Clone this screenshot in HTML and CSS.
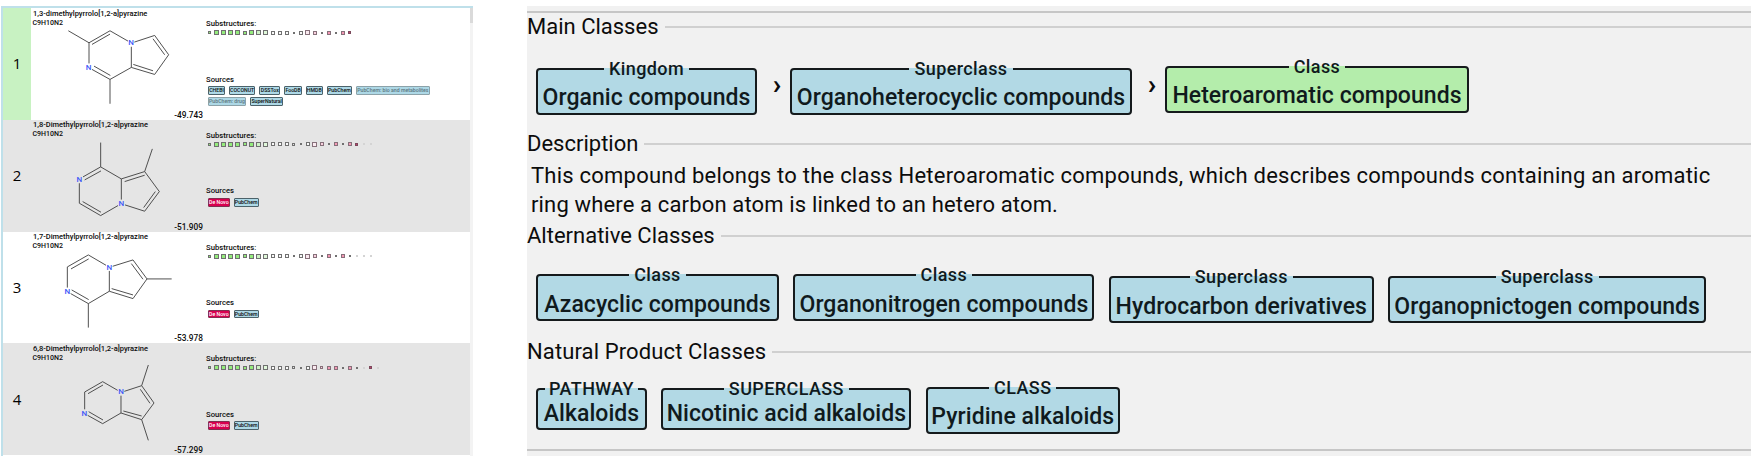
FILE: index.html
```html
<!DOCTYPE html>
<html lang="en">
<head>
<meta charset="utf-8">
<title>Compound classes</title>
<link rel="stylesheet" href="styles.css">
</head>
<body>
<main class="app">
  <div class="list">
    <div class="rows">
      <article class="row selected">
        <div class="index">1</div>
        <div class="structure">
          <div class="heading"><div class="name">1,3-dimethylpyrrolo[1,2-a]pyrazine</div><div class="formula">C9H10N2</div></div>
          <svg class="molecule" viewBox="93 23.7 525 335.4">
            <path d="M205 92L267 128L330 92L384 123M276 133L330 102M403 126L464 106L506 164L464 223L394 202V140M459 116L494 164M400 193L459 212M394 202L330 238L276 208M331 226L282 198M330 238V311M267 128V190"/>
            <text x="393" y="136">N</text><text x="266" y="209">N</text>
          </svg>
          <div class="score">-49.743</div>
        </div>
        <div class="info">
          <div class="label">Substructures:</div>
          <div class="dots"><i class="s g"></i><i class="l g"></i><i class="l g"></i><i class="l g"></i><i class="l g"></i><i class="m g"></i><i class="l g"></i><i class="l g2"></i><i class="l g3"></i><i class="m"></i><i class="m"></i><i class="m"></i><i class="d"></i><i class="m"></i><i class="l p1"></i><i class="m p2"></i><i class="d"></i><i class="m p3"></i><i class="d"></i><i class="m p3"></i><i class="s p4"></i></div>
          <div class="label sources">Sources</div>
          <div class="tags"><span class="tag w17">CHEBI</span><span class="tag w26">COCONUT</span><span class="tag w21">DSSTox</span><span class="tag w17">FooDB</span><span class="tag w17">HMDB</span><span class="tag w25">PubChem</span><span class="tag dim w74">PubChem: bio and metabolites</span><span class="tag dim w38">PubChem: drug</span><span class="tag w33">SuperNatural</span></div>
        </div>
      </article>
      <article class="row even">
        <div class="index">2</div>
        <div class="structure">
          <div class="heading"><div class="name">1,8-Dimethylpyrrolo[1,2-a]pyrazine</div><div class="formula">C9H10N2</div></div>
          <svg class="molecule" viewBox="93 14.3 525 335.4">
            <path d="M302 82V155L249 185M303 167L254 194M238 204V264L302 301L354 271M248 259L303 291M364 253V191L302 155M364 191L434 169L457 101M374 199L434 180M434 169L478 229L434 288L375 269M466 229L431 277"/>
            <text x="238" y="199">N</text><text x="364" y="272">N</text>
          </svg>
          <div class="score">-51.909</div>
        </div>
        <div class="info">
          <div class="label">Substructures:</div>
          <div class="dots"><i class="s g"></i><i class="l g"></i><i class="l g"></i><i class="l g"></i><i class="l g"></i><i class="m g"></i><i class="l g"></i><i class="l g2"></i><i class="l g3"></i><i class="m"></i><i class="m"></i><i class="m"></i><i class="s"></i><i class="d"></i><i class="m"></i><i class="l p1"></i><i class="m p2"></i><i class="d"></i><i class="m p3"></i><i class="d"></i><i class="m p3"></i><i class="s p4"></i><i class="f"></i><i class="f"></i></div>
          <div class="label sources">Sources</div>
          <div class="tags"><span class="tag novo">De Novo</span><span class="tag w25">PubChem</span></div>
        </div>
      </article>
      <article class="row">
        <div class="index">3</div>
        <div class="structure">
          <div class="heading"><div class="name">1,7-Dimethylpyrrolo[1,2-a]pyrazine</div><div class="formula">C9H10N2</div></div>
          <svg class="molecule" viewBox="93 11.2 525 335.4">
            <path d="M202 178V116L265 80L318 111M213 122L266 92M338 114L399 95L441 152H515M394 106L429 153M441 152L399 211L328 189V128M335 181L399 200M328 189L265 226L212 196M266 214L215 185M265 226V298"/>
            <text x="328" y="124">N</text><text x="202" y="197">N</text>
          </svg>
          <div class="score">-53.978</div>
        </div>
        <div class="info">
          <div class="label">Substructures:</div>
          <div class="dots"><i class="s g"></i><i class="l g"></i><i class="l g"></i><i class="l g"></i><i class="l g"></i><i class="m g"></i><i class="l g"></i><i class="l g2"></i><i class="l g3"></i><i class="m"></i><i class="m"></i><i class="m"></i><i class="d"></i><i class="m"></i><i class="l p1"></i><i class="m p2"></i><i class="d"></i><i class="m p3"></i><i class="d"></i><i class="m p3"></i><i class="d"></i><i class="f"></i><i class="f"></i><i class="f"></i></div>
          <div class="label sources">Sources</div>
          <div class="tags"><span class="tag novo">De Novo</span><span class="tag w25">PubChem</span></div>
        </div>
      </article>
      <article class="row even">
        <div class="index">4</div>
        <div class="structure">
          <div class="heading"><div class="name">6,8-Dimethylpyrrolo[1,2-a]pyrazine</div><div class="formula">C9H10N2</div></div>
          <svg class="molecule" viewBox="93 22 525 335.4">
            <path d="M254 221V169L308 138L353 164M264 174L309 148M373 167L425 150L445 88M425 150L462 202L425 252L445 314M421 161L450 203M425 252L363 232V180M370 226L425 241M363 232L308 264L263 239M309 253L266 228"/>
            <text x="363" y="176">N</text><text x="253" y="240">N</text>
          </svg>
          <div class="score">-57.299</div>
        </div>
        <div class="info">
          <div class="label">Substructures:</div>
          <div class="dots"><i class="s g"></i><i class="l g"></i><i class="l g"></i><i class="l g"></i><i class="l g"></i><i class="m g"></i><i class="l g"></i><i class="l g2"></i><i class="l g3"></i><i class="m"></i><i class="m"></i><i class="m"></i><i class="s"></i><i class="d"></i><i class="m"></i><i class="l p1"></i><i class="s p2"></i><i class="m p3"></i><i class="m p3"></i><i class="d"></i><i class="m p3"></i><i class="d"></i><i class="f"></i><i class="s p4"></i><i class="f"></i></div>
          <div class="label sources">Sources</div>
          <div class="tags"><span class="tag novo">De Novo</span><span class="tag w25">PubChem</span></div>
        </div>
      </article>
    </div>
    <div class="scrollbar"><div class="thumb"></div></div>
  </div>

  <div class="detail">
    <section class="group main">
      <h2><span>Main Classes</span></h2>
      <div class="chips">
        <div class="chip kingdom"><span class="title">Kingdom</span><span class="value">Organic compounds</span></div>
        <span class="arrow">›</span>
        <div class="chip hetero"><span class="title">Superclass</span><span class="value">Organoheterocyclic compounds</span></div>
        <span class="arrow">›</span>
        <div class="chip green"><span class="title">Class</span><span class="value">Heteroaromatic compounds</span></div>
      </div>
    </section>
    <section class="group description">
      <h2><span>Description</span></h2>
      <p>This compound belongs to the class Heteroaromatic compounds, which describes compounds containing an aromatic<br><span class="last">ring where a carbon atom is linked to an hetero atom.</span></p>
    </section>
    <section class="group alternative">
      <h2><span>Alternative Classes</span></h2>
      <div class="chips">
        <div class="chip aza"><span class="title">Class</span><span class="value">Azacyclic compounds</span></div>
        <div class="chip nitro"><span class="title">Class</span><span class="value">Organonitrogen compounds</span></div>
        <div class="chip hydro"><span class="title">Superclass</span><span class="value">Hydrocarbon derivatives</span></div>
        <div class="chip pnicto"><span class="title">Superclass</span><span class="value">Organopnictogen compounds</span></div>
      </div>
    </section>
    <section class="group natural">
      <h2><span>Natural Product Classes</span></h2>
      <div class="chips">
        <div class="chip short alk"><span class="title">PATHWAY</span><span class="value">Alkaloids</span></div>
        <div class="chip short nico"><span class="title">SUPERCLASS</span><span class="value">Nicotinic acid alkaloids</span></div>
        <div class="chip pyri"><span class="title">CLASS</span><span class="value">Pyridine alkaloids</span></div>
      </div>
    </section>
  </div>
</main>
</body>
</html>
```
FILE: styles.css
```css
* { box-sizing: border-box; }
body { margin: 0; background: #fff; color: #0c0c0c; font-family: Roboto, "Liberation Sans", sans-serif; overflow: hidden; }
.app { display: flex; height: 456px; padding: 6px 0 0 1px; }

/* Candidate list */
.list { display: flex; width: 472px; height: 449.5px; margin-right: 54px; border-top: 2px solid #bfe0ea; border-left: 2px solid #bfe0ea; }
.rows { width: 467px; }
.row { display: flex; height: 111.8px; background: #fff; }
.row.even { background: #e5e5e5; }
.index { display: flex; align-items: center; justify-content: center; width: 28px; padding-bottom: 1.5px; font: 15px "Open Sans", sans-serif; color: #000; }
.selected .index { background: #c8f2c2; }
.structure { display: grid; width: 175px; }
.structure > * { grid-area: 1 / 1; }
.heading { padding: .6px 0 0 2px; font-weight: 500; white-space: nowrap; }
.name { font-size: 7.5px; line-height: 10px; }
.formula { font-size: 7px; line-height: 8px; margin-left: -.5px; }
.molecule { width: 175px; height: 111.8px; }
.molecule path { fill: none; stroke: #444; stroke-width: 2.8; }
.molecule text { fill: #4058f8; font-size: 24px; font-weight: 500; text-anchor: middle; }
.score { align-self: end; justify-self: end; margin-right: 3px; font-size: 8.3px; line-height: 10px; font-weight: 500; }
.info { width: 264px; }
.label { font-size: 7.7px; line-height: 10px; font-weight: 500; padding-top: 11px; }
.dots { display: flex; height: 7px; align-items: center; }
.dots i { flex: none; width: 3px; height: 3px; margin: 0 2px; border: 1px solid #707070; }
.dots .l { width: 5px; height: 5px; margin: 0 1px; }
.dots .m { width: 4px; height: 4px; margin: 0 1.5px; }
.dots .d { width: 2px; height: 2px; margin: 0 2.5px; }
.dots .f { width: 2px; height: 2px; margin: 0 2.5px; border-color: #d4d4d4; }
.m { background: #fafafa; }
.g { background: #94ec7c; }
.g2 { background: #cdf2c4; }
.g3 { background: #e0f8da; }
.p1 { background: #faeaf0; }
.p2 { background: #f8d0de; }
.dots .p1, .dots .p2, .dots .p3 { border-color: #86707a; }
.m.p3 { background: #f498b4; }
.dots .s.p4 { background: #c04070; border-color: #7c4a5c; }
.sources { padding-top: 38.7px; }
.tags { display: flex; flex-wrap: wrap; gap: 2.3px 4px; padding: 1.4px 0 0 2px; }
.tag { height: 8.8px; width: 25px; border: 1px solid #4c626a; border-radius: 1px; background: #add8e6; font-size: 5.2px; font-weight: 500; line-height: 7px; display: flex; justify-content: center; white-space: nowrap; }
.w17 { width: 17.2px; } .w21 { width: 21.3px; } .w26 { width: 26px; } .w33 { width: 33.3px; } .w38 { width: 38px; } .w74 { width: 74px; }
.tag.dim { color: #5c757e; border-color: #8ca2a9; }
.tag.novo { width: 21.7px; background: #d8004f; color: #fff; border-color: #803050; }
.scrollbar { width: 3px; background: #f3f3f3; }
.thumb { height: 15px; background: #dadada; }

/* Class details */
.detail { width: 1224px; height: 450px; padding-top: 8px; background: #f1f1f1; background-image: linear-gradient(#c6c6c6, #c6c6c6), linear-gradient(#c6c6c6, #c6c6c6); background-repeat: no-repeat; background-size: 100% 2px; background-position: 0 5px, 0 443px; }
.main { height: 117px; }
.description { height: 92px; }
.alternative { height: 116px; }
h2 { display: flex; align-items: center; gap: 6px; margin: 0; font-size: 22px; font-weight: 400; line-height: 26px; white-space: nowrap; }
.natural h2 { letter-spacing: .12px; }
h2::after { content: ""; flex: 1; height: 2px; background: #d0d0d0; }
p { margin: 4px 0 0 4px; font-size: 22px; line-height: 29.3px; letter-spacing: .23px; white-space: nowrap; }
.last { letter-spacing: .15px; }
.chips { display: flex; align-items: flex-start; padding: 27.5px 0 0 9px; gap: 14.4px; }
.main .chips { gap: 0; }
.alternative .chips { padding-top: 25px; }
.natural .chips { padding-top: 21.5px; }
.chip { flex: none; display: flex; flex-direction: column; justify-content: space-between; align-items: center; height: 47px; padding-bottom: 1.2px; border: 2px solid #151a1c; border-radius: 4px; background: #b2d9e5; color: #101a1d; font-weight: 500; white-space: nowrap; }
.title { margin-top: -11px; padding: 0 5px; font-size: 18px; line-height: 20px; letter-spacing: .4px; background: linear-gradient(#b2d9e5, #b2d9e5) 0 9px / 100% 2px no-repeat; }
.value { font-size: 23px; line-height: 26px; letter-spacing: .05px; }
.arrow { width: 33px; padding: 3px 0 0 7px; text-align: center; font-size: 28px; line-height: 28px; font-weight: 700; }
.kingdom { width: 221px; }
.hetero { width: 342px; }
.green { width: 304px; margin-top: -2px; background: #b4edab; }
.green .title { background-image: linear-gradient(#b4edab, #b4edab); }
.aza { width: 243px; }
.nitro { width: 301px; }
.hydro { width: 265px; margin-top: 2px; }
.pnicto { width: 318px; margin-top: 2px; }
.short { height: 42px; margin-top: 1.5px; }
.alk { width: 111px; }
.alk .title { padding: 0 4px; }
.nico { width: 250px; }
.pyri { width: 194px; padding-bottom: 2px; }
```
